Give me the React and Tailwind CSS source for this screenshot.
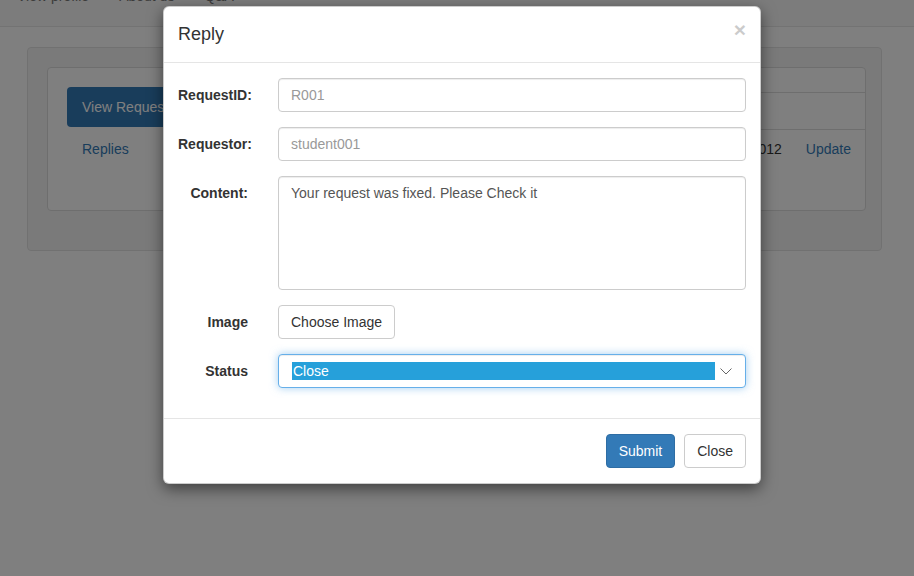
export default function App() {
  const field = "w-full h-[34px] rounded-[4px] border border-[#ccc] bg-white px-3 text-[14px] shadow-[inset_0_1px_1px_rgba(0,0,0,0.075)] flex items-center";
  const label = "w-[70px] shrink-0 pt-[7px] text-right whitespace-nowrap font-bold text-[14px] text-[#333]";

  return (
    <div className="relative w-[914px] h-[576px] overflow-hidden bg-white font-['Liberation_Sans',Arial,sans-serif] text-[14px] text-[#333]">
      {/* page under the backdrop */}
      <div className="h-[27px] bg-[#f8f8f8] border-b border-[#e7e7e7] flex items-end pb-[20px] pl-[17px] gap-[30px] text-[#777] leading-[20px]">
        <span>View profile</span>
        <span>About us</span>
        <span>Q&amp;A</span>
      </div>
      <div className="mt-[20px] mx-[27px] w-[855px] h-[204px] rounded-[4px] border border-[#e3e3e3] bg-[#f5f5f5] p-[19px]">
        <div className="w-[819px] h-[144px] rounded-[4px] border border-[#ddd] bg-white pt-[19px] pl-[19px] flex">
          <div className="flex flex-col">
            <div className="h-[40px] w-[130px] rounded-[4px] bg-[#337ab7] text-white flex items-center pl-[15px] whitespace-nowrap">View Request</div>
            <div className="mt-[12px] pl-[15px] text-[#337ab7]">Replies</div>
          </div>
          <div className="flex-1" />
          <div className="w-[230px] flex flex-col">
            <div className="h-[6px] border-b border-[#ddd]" />
            <div className="h-[37px] border-b border-[#ddd]" />
            <div className="flex justify-end mt-[9px] pr-[14px] gap-[24px]">
              <span>2012</span>
              <span className="text-[#337ab7]">Update</span>
            </div>
          </div>
        </div>
      </div>

      {/* backdrop */}
      <div className="absolute inset-0 bg-black/50" />

      {/* modal */}
      <div className="absolute left-[163px] top-[6px] w-[598px] rounded-[6px] bg-white border border-black/20 shadow-[0_5px_15px_rgba(0,0,0,0.5)]">
        <div className="relative h-[56px] border-b border-[#e5e5e5] px-[14px] pt-[14px]">
          <div className="text-[18px] leading-[26px] text-[#333]">Reply</div>
          <span className="absolute right-[14px] top-[12px] text-[21px] font-bold leading-[21px] text-black opacity-20">×</span>
        </div>
        <div className="px-[14px] pt-[15px] pb-[30px] flex flex-col gap-[15px]">
          <div className="flex gap-[30px]">
            <div className={label}>RequestID:</div>
            <div className={field + " text-[#999]"}>R001</div>
          </div>
          <div className="flex gap-[30px]">
            <div className={label}>Requestor:</div>
            <div className={field + " text-[#999]"}>student001</div>
          </div>
          <div className="flex gap-[30px]">
            <div className={label}>Content:</div>
            <div className="w-full h-[114px] rounded-[4px] border border-[#ccc] bg-white px-3 py-[6px] leading-[20px] text-[#555] shadow-[inset_0_1px_1px_rgba(0,0,0,0.075)]">
              Your request was fixed. Please Check it
            </div>
          </div>
          <div className="flex gap-[30px]">
            <div className={label}>Image</div>
            <div className="h-[34px] px-3 rounded-[4px] border border-[#ccc] bg-white flex items-center text-[#333]">Choose Image</div>
          </div>
          <div className="flex gap-[30px]">
            <div className={label}>Status</div>
            <div className="w-full h-[34px] rounded-[4px] border border-[#66afe9] bg-white flex items-center pl-[13px] pr-[12px] shadow-[inset_0_1px_1px_rgba(0,0,0,0.075),0_0_8px_rgba(102,175,233,0.6)]">
              <div className="flex-1 h-[18px] bg-[#26a0da] text-white leading-[18px] pl-[1px]">Close</div>
              <svg className="ml-[4px] w-[14px] h-[14px]" viewBox="0 0 14 14" fill="none" stroke="#666" strokeWidth="1">
                <path d="M1.5 4.5 L7 10 L12.5 4.5" />
              </svg>
            </div>
          </div>
        </div>
        <div className="border-t border-[#e5e5e5] px-[14px] py-[15px] flex justify-end gap-[9px]">
          <div className="h-[34px] px-3 rounded-[4px] border border-[#2e6da4] bg-[#337ab7] text-white flex items-center">Submit</div>
          <div className="h-[34px] px-3 rounded-[4px] border border-[#ccc] bg-white text-[#333] flex items-center">Close</div>
        </div>
      </div>
    </div>
  );
}
